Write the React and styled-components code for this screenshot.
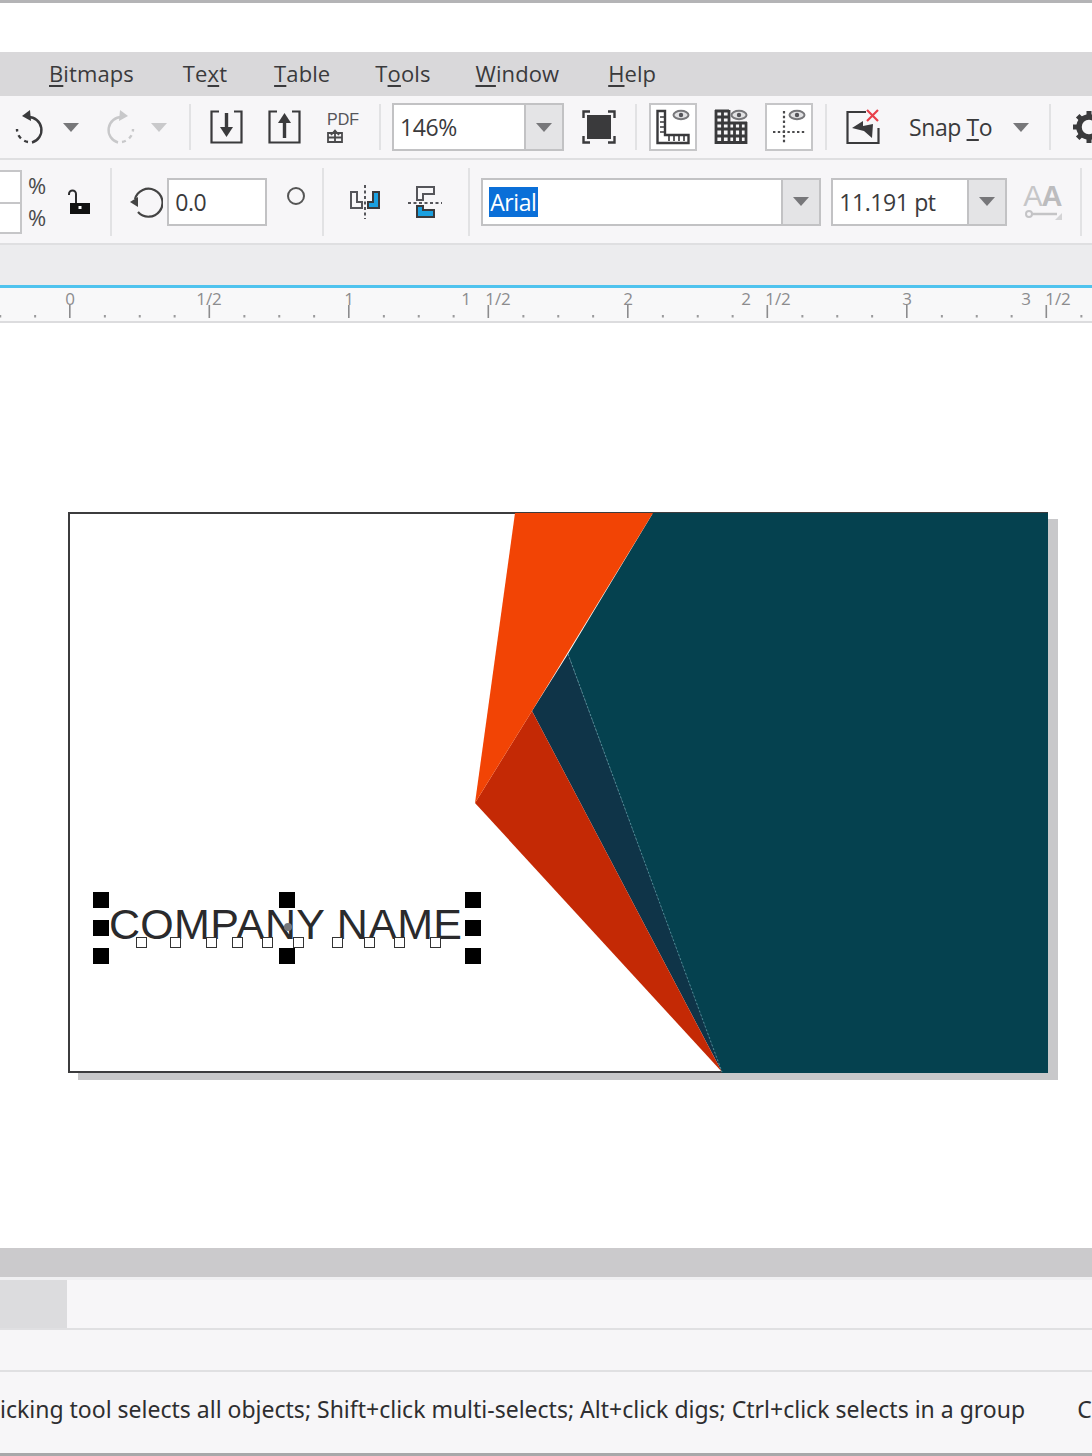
import styled, { createGlobalStyle } from "styled-components";

const GlobalStyle = createGlobalStyle`
    html, body {
        margin: 0;
        padding: 0;
        background: #fff;
    }
`;

const Page = styled.div`
    width: 1092px;
    height: 1456px;
    display: flex;
    flex-direction: column;
    overflow: hidden;
    background: #fff;
    font-family: "Open Sans", "Noto Sans", sans-serif;
    color: #333;
`;

const TopStrip = styled.div`
    height: 49px;
    flex: none;
    background: #fff;
    border-top: 3px solid #b4b4b6;
`;

const MenuBar = styled.nav`
    height: 44px;
    flex: none;
    background: #d9d8da;
    display: flex;
    align-items: center;
    font-size: 22px;
    letter-spacing: 0.1px;
    color: #3a3a3c;
`;

const MenuItem = styled.span`
    flex: none;
    margin-left: ${(p) => p.$ml}px;
    line-height: 42px;
    padding-bottom: 2px;
    white-space: nowrap;

    & u {
        text-underline-offset: 3px;
        text-decoration-thickness: 2px;
    }
`;

const Toolbar = styled.div`
    height: ${(p) => p.$h}px;
    flex: none;
    box-sizing: border-box;
    background: #f7f6f8;
    border-bottom: 2px solid #dfdfe1;
    display: flex;
    align-items: center;
`;

const Tool = styled.div`
    flex: none;
    width: ${(p) => p.$w}px;
    height: ${(p) => p.$h || 48}px;
    margin-left: ${(p) => p.$ml || 0}px;
    display: flex;
    align-items: center;
    justify-content: center;

    & svg {
        display: block;
    }
`;

const ToggleTool = styled(Tool)`
    background: #fff;
    border: 2px solid #c6c6c8;
    box-sizing: border-box;
`;

const StackedTool = styled(Tool)`
    flex-direction: column;
    align-items: flex-start;
    justify-content: center;
`;

const PdfLabel = styled.span`
    font-family: "Liberation Sans", Arial, sans-serif;
    font-size: 16px;
    line-height: 18px;
    color: #55555a;
`;

const AaLabel = styled.span`
    font-family: "Liberation Sans", Arial, sans-serif;
    font-size: 29px;
    line-height: 28px;
    color: #c6c6c8;
    letter-spacing: -1px;
    white-space: nowrap;

    & b {
        color: #bcbcbe;
    }
`;

const Sep = styled.div`
    flex: none;
    width: 2px;
    height: ${(p) => p.$h || 46}px;
    margin-left: ${(p) => p.$ml}px;
    background: #e2e2e4;
`;

const Caret = styled.div`
    flex: none;
    width: 0;
    height: 0;
    margin-left: ${(p) => p.$ml || 0}px;
    border-left: 8px solid transparent;
    border-right: 8px solid transparent;
    border-top: 9px solid ${(p) => (p.$muted ? "#c9c9cb" : "#77777a")};
`;

const Combo = styled.div`
    flex: none;
    display: flex;
    width: ${(p) => p.$w}px;
    height: 48px;
    margin-left: ${(p) => p.$ml}px;
    box-sizing: border-box;
    border: 2px solid #c2c2c4;
    background: #fff;
`;

const ComboText = styled.div`
    flex: 1;
    display: flex;
    align-items: center;
    padding-left: ${(p) => p.$pl || 6}px;
    font-size: 23px;
    letter-spacing: -0.4px;
    color: #3a3a3c;
`;

const ComboArrow = styled.div`
    flex: none;
    width: ${(p) => p.$w || 38}px;
    background: #e4e4e6;
    border-left: 2px solid #c2c2c4;
    box-sizing: border-box;
    display: flex;
    align-items: center;
    justify-content: center;
`;

const Selected = styled.span`
    background: #0a6fd8;
    color: #fff;
    line-height: 30px;
    height: 30px;
    padding: 0 1px;
`;

const SnapLabel = styled.span`
    flex: none;
    margin-left: 29px;
    font-size: 23px;
    letter-spacing: -0.4px;
    color: #3a3a3c;
    white-space: nowrap;

    & u {
        text-underline-offset: 3px;
        text-decoration-thickness: 2px;
    }
`;

const ScaleStack = styled.div`
    flex: none;
    width: 22px;
    height: 64px;
    box-sizing: border-box;
    background: #fff;
    border: 2px solid #c6c6c8;
    border-left: 0;

    &::after {
        content: "";
        display: block;
        height: 2px;
        margin-top: 30px;
        background: #c6c6c8;
    }
`;

const PercentStack = styled.div`
    flex: none;
    margin-left: 6px;
    display: flex;
    flex-direction: column;
    gap: 7px;
    font-size: 22px;
    line-height: 25px;
    color: #4a4a4c;
`;

const Degree = styled.div`
    flex: none;
    width: 14px;
    height: 14px;
    margin-left: 20px;
    margin-top: -12px;
    border: 2.5px solid #555;
    border-radius: 50%;
`;

const Band = styled.div`
    height: 40px;
    flex: none;
    background: #ececee;
`;

const BlueLine = styled.div`
    height: 3px;
    flex: none;
    background: #4fc3ee;
`;

const RulerWrap = styled.div`
    height: 35px;
    flex: none;
    background: #f8f8f9;
    border-bottom: 2px solid #dcdcde;
    box-sizing: border-box;

    & svg {
        display: block;
    }

    & text {
        font-family: "Open Sans", sans-serif;
        font-size: 17px;
        fill: #8c8c8e;
    }
`;

const Canvas = styled.main`
    flex: 1;
    min-height: 0;
    background: #fff;
    padding: 189px 0 0 68px;
`;

const Card = styled.div`
    position: relative;
    width: 980px;
    height: 561px;
    background: #fff;
    box-sizing: border-box;
    border: 2px solid #3c3c3e;
    border-right: 0;
    box-shadow: 10px 7px 0 #c8c8ca;

    & > svg {
        position: absolute;
        left: -2px;
        top: -2px;
    }
`;

const CompanyName = styled.div`
    position: absolute;
    left: 39px;
    top: 385px;
    font-family: "Liberation Sans", Arial, sans-serif;
    font-size: 43px;
    line-height: 50px;
    letter-spacing: 0.3px;
    color: #2a2a2c;
    white-space: nowrap;
`;

const Handle = styled.div`
    position: absolute;
    width: 16px;
    height: 16px;
    background: #000;
    left: ${(p) => p.$x - 70}px;
    top: ${(p) => p.$y - 514}px;
`;

const Node = styled.div`
    position: absolute;
    width: 11px;
    height: 11px;
    box-sizing: border-box;
    background: #fff;
    border: 1.5px solid #333;
    left: ${(p) => p.$x - 70}px;
    top: 423px;
`;

const CenterMark = styled.div`
    position: absolute;
    left: 214px;
    top: 409px;
    width: 8px;
    height: 8px;
    border-radius: 50%;
    background: #77777a;
`;

const GreyStrip = styled.div`
    height: 29px;
    flex: none;
    background: #cbcacc;
    border-bottom: 3px solid #f0f0f2;
`;

const PageTabs = styled.div`
    height: 50px;
    flex: none;
    box-sizing: border-box;
    background: #f7f6f8;
    border-bottom: 2px solid #e0e0e2;
`;

const ActiveTab = styled.div`
    width: 67px;
    height: 48px;
    background: #dcdcde;
`;

const EmptyRow = styled.div`
    height: 42px;
    flex: none;
    box-sizing: border-box;
    background: #f7f6f8;
    border-bottom: 2px solid #e0e0e2;
`;

const StatusBar = styled.footer`
    height: 84px;
    flex: none;
    box-sizing: border-box;
    background: #f7f6f8;
    border-bottom: 3px solid #a8a8aa;
    display: flex;
    align-items: center;
    overflow: hidden;
    white-space: nowrap;
    font-family: "Noto Sans", sans-serif;
    font-size: 23px;
    color: #2e2e30;
`;

const StatusText = styled.span`
    flex: none;
    padding-bottom: 8px;
`;

const StatusNext = styled.span`
    flex: none;
    margin-left: 52px;
    padding-bottom: 8px;
`;

const stroke = "#3a3a3c";

const UndoIcon = () => (
    <svg width="34" height="36" viewBox="0 0 34 36" fill="none" stroke={stroke} strokeWidth="2.4">
        <path d="M14 8 A13 13 0 0 1 18 33.5" />
        <path d="M14 33 A13 13 0 0 1 3 20" strokeDasharray="4 4" />
        <path d="M16 1 L8 7 L17 12 Z" fill={stroke} stroke="none" />
    </svg>
);

const RedoIcon = () => (
    <svg width="34" height="36" viewBox="0 0 34 36" fill="none" stroke="#c8c8ca" strokeWidth="2.4">
        <path d="M20 8 A13 13 0 0 0 16 33.5" />
        <path d="M20 33 A13 13 0 0 0 31 20" strokeDasharray="4 4" />
        <path d="M18 1 L26 7 L17 12 Z" fill="#c8c8ca" stroke="none" />
    </svg>
);

const TransferIcon = ({ up }) => (
    <svg width="33" height="34" viewBox="0 0 33 34" fill="none" stroke={stroke} strokeWidth="2.2">
        <path d="M9 1.5 H1.5 V32.5 H31.5 V1.5 H24" />
        {up ? (
            <>
                <path d="M16.5 28 V10" strokeWidth="3.4" />
                <path d="M16.5 3 L10 13 H23 Z" fill={stroke} stroke="none" />
            </>
        ) : (
            <>
                <path d="M16.5 3 V20" strokeWidth="3.4" />
                <path d="M16.5 27 L10 17 H23 Z" fill={stroke} stroke="none" />
            </>
        )}
    </svg>
);

const PdfBoxIcon = () => (
    <svg width="16" height="14" viewBox="0 0 16 14" fill="none" stroke="#4a4a4c" strokeWidth="1.8">
        <path d="M1 4 H15 V13 H1 Z M8 13 V5 M4 6 L8 1.5 L12 6 M1 8.5 H15" />
    </svg>
);

const FitIcon = () => (
    <svg width="34" height="34" viewBox="0 0 34 34" fill="none" stroke={stroke} strokeWidth="2.4">
        <path d="M1.5 8 V1.5 H8 M26 1.5 H32.5 V8 M32.5 26 V32.5 H26 M8 32.5 H1.5 V26" />
        <rect x="5" y="5" width="24" height="24" fill={stroke} stroke="none" />
    </svg>
);

const Eye = ({ x }) => (
    <g transform={`translate(${x} 1)`} fill="#e2e2e4" stroke="#77777a" strokeWidth="2">
        <ellipse cx="8" cy="5" rx="7.5" ry="4.2" />
        <circle cx="8" cy="5" r="2.2" fill="#55555a" stroke="none" />
    </g>
);

const RulersIcon = () => (
    <svg width="34" height="36" viewBox="0 0 34 36" fill="none" stroke={stroke} strokeWidth="2.4">
        <path d="M1.5 2 H9 V26 H32.5 V34 H1.5 Z" />
        <path d="M4 8 H8 M4 13 H8 M4 18 H8 M4 23 H8 M13 27 V32 M18 27 V32 M23 27 V32 M28 27 V32" strokeWidth="1.6" />
        <Eye x={17} />
    </svg>
);

const GridIcon = () => (
    <svg width="34" height="36" viewBox="0 0 34 36" fill="none" stroke={stroke} strokeWidth="2.8">
        <path d="M1 2 H15 M1 8 H15 M1 14 H33 M1 20 H33 M1 27 H33 M1 33.5 H33" />
        <path d="M2 1 V35 M8.5 1 V35 M15 1 V35 M20.5 13 V35 M26.5 13 V35 M32 13 V35" />
        <Eye x={17} />
    </svg>
);

const GuidesIcon = () => (
    <svg width="34" height="36" viewBox="0 0 34 36" fill="none" stroke="#4a4a4c" strokeWidth="2.2">
        <path d="M12 2 V34 M1 23 H33" strokeDasharray="2.4 2.4" />
        <Eye x={17} />
    </svg>
);

const SnapOffIcon = () => (
    <svg width="34" height="36" viewBox="0 0 34 36" fill="none" stroke={stroke} strokeWidth="2.2">
        <path d="M20 3 H1.5 V34 H32.5 V19" />
        <path d="M6 19 L17 12 V17 L27 15 L26 29 L18 22 Z" fill={stroke} stroke="none" />
        <path d="M21 1 L32 12 M32 1 L21 12" stroke="#e8404a" strokeWidth="2.2" />
    </svg>
);

const GearIcon = () => (
    <svg width="34" height="36" viewBox="0 0 34 36" fill="none" stroke={stroke}>
        <circle cx="18" cy="18" r="10" strokeWidth="5.5" />
        <path
            d="M18 2 V7 M18 29 V34 M2 18 H7 M29 18 H34 M6.7 6.7 L10 10 M26 26 L29.3 29.3 M6.7 29.3 L10 26 M26 10 L29.3 6.7"
            strokeWidth="5"
        />
    </svg>
);

const LockIcon = () => (
    <svg width="22" height="26" viewBox="0 0 22 26" fill="none" stroke="#2c2c2e" strokeWidth="2">
        <path d="M1 6 V5 A3.5 3.5 0 0 1 8 5 V14" />
        <rect x="2" y="14" width="20" height="11" fill="#111" stroke="none" />
        <rect x="10.5" y="17" width="3" height="3" fill="#fff" stroke="none" />
    </svg>
);

const RotateIcon = () => (
    <svg width="33" height="34" viewBox="0 0 33 34" fill="none" stroke="#444" strokeWidth="2.2">
        <path d="M5 14 A14 14 0 1 1 8 27" />
        <path d="M0 17 L8 12 L8 22 Z" fill="#444" stroke="none" />
    </svg>
);

const MirrorHIcon = () => (
    <svg width="32" height="34" viewBox="0 0 32 34" fill="none" stroke="#55555a" strokeWidth="2">
        <path d="M2 7 H8 V17 H13 V23 H2 Z" />
        <path d="M30 7 H24 V17 H19 V23 H30 Z" fill="#1aa0e0" stroke="#3a3a3c" />
        <path d="M16 0 V34" strokeDasharray="3 2.5" />
    </svg>
);

const MirrorVIcon = () => (
    <svg width="34" height="34" viewBox="0 0 34 34" fill="none" stroke="#55555a" strokeWidth="2">
        <path d="M9 2 H26 V9 H15 V15 H9 Z" />
        <path d="M9 21 H15 V25 H26 V32 H9 Z" fill="#1aa0e0" stroke="#3a3a3c" />
        <path d="M0 18 H34" strokeDasharray="3 2.5" />
    </svg>
);

const AaSliderIcon = () => (
    <svg width="40" height="11" viewBox="0 0 40 11" fill="none" stroke="#c4c4c6" strokeWidth="2.5">
        <path d="M8 4 H34" />
        <circle cx="6" cy="4" r="3" fill="#f7f6f8" strokeWidth="2" />
        <path d="M39 3 V10 H32 Z" fill="#d4d4d6" stroke="none" />
    </svg>
);

// ruler: 1/8 inch = 34.9px, zero at x=70
const RULER_ZERO = 70;
const HALF = 139.5;
const wholeLabels = [
    [0, "0"],
    [2, "1"],
    [4, "2"],
    [6, "3"],
];

const Ruler = () => {
    const ticks = [];
    for (let i = -2; i < 32; i++) {
        ticks.push(RULER_ZERO + (i * HALF) / 4);
    }
    return (
        <RulerWrap>
            <svg width="1092" height="33" viewBox="0 0 1092 33">
                {ticks.map((x, i) =>
                    (i - 2) % 4 === 0 ? (
                        <rect key={i} x={x - 1} y="17" width="1.6" height="13" fill="#8c8c8e" />
                    ) : (
                        <rect key={i} x={x - 1} y="27" width="2" height="2.5" fill="#9a9a9c" />
                    ),
                )}
                {wholeLabels.map(([n, label]) => (
                    <text key={n} x={RULER_ZERO + n * HALF} y="17" textAnchor="middle">
                        {label}
                    </text>
                ))}
                <text x="209" y="17" textAnchor="middle">1/2</text>
                <text x="466" y="17" textAnchor="middle">1</text>
                <text x="498" y="17" textAnchor="middle">1/2</text>
                <text x="746" y="17" textAnchor="middle">2</text>
                <text x="778" y="17" textAnchor="middle">1/2</text>
                <text x="1026" y="17" textAnchor="middle">3</text>
                <text x="1058" y="17" textAnchor="middle">1/2</text>
            </svg>
        </RulerWrap>
    );
};

const Artwork = () => (
    <svg width="980" height="561" viewBox="68 512 980 561">
        <polygon points="653,513 1048,513 1048,1073 722,1073 568,654" fill="#05414f" />
        <polygon points="532,711 568,654 722,1072" fill="#0f3448" />
        <polygon points="475,803 532,711 722,1072" fill="#c42905" />
        <polygon points="515,513 653,513 532,711 475,803" fill="#f24405" />
        <path d="M568 654 L722 1072" stroke="#4d8a96" strokeWidth="1" strokeDasharray="2 2" fill="none" />
    </svg>
);

const handleXs = [93, 279, 465];
const handleYs = [892, 920, 948];
const nodeXs = [136, 170, 206, 232, 262, 293, 332, 364, 394, 430];

export default function App() {
    return (
        <Page>
            <GlobalStyle />
            <TopStrip />
            <MenuBar>
                <MenuItem $ml={49}><u>B</u>itmaps</MenuItem>
                <MenuItem $ml={49}>Te<u>x</u>t</MenuItem>
                <MenuItem $ml={47}><u>T</u>able</MenuItem>
                <MenuItem $ml={45}>T<u>o</u>ols</MenuItem>
                <MenuItem $ml={45}><u>W</u>indow</MenuItem>
                <MenuItem $ml={49}><u>H</u>elp</MenuItem>
            </MenuBar>
            <Toolbar $h={64}>
                <Tool $w={34} $ml={14}><UndoIcon /></Tool>
                <Caret $ml={15} />
                <Tool $w={34} $ml={23}><RedoIcon /></Tool>
                <Caret $ml={15} $muted />
                <Sep $ml={22} />
                <Tool $w={33} $ml={19}><TransferIcon /></Tool>
                <Tool $w={33} $ml={25}><TransferIcon up /></Tool>
                <StackedTool $w={34} $ml={26}>
                    <PdfLabel>PDF</PdfLabel>
                    <PdfBoxIcon />
                </StackedTool>
                <Sep $ml={18} />
                <Combo $w={172} $ml={11}>
                    <ComboText>146%</ComboText>
                    <ComboArrow><Caret /></ComboArrow>
                </Combo>
                <Tool $w={34} $ml={18}><FitIcon /></Tool>
                <Sep $ml={19} />
                <ToggleTool $w={48} $ml={12}><RulersIcon /></ToggleTool>
                <Tool $w={48} $ml={10}><GridIcon /></Tool>
                <ToggleTool $w={48} $ml={10}><GuidesIcon /></ToggleTool>
                <Sep $ml={12} />
                <Tool $w={34} $ml={19}><SnapOffIcon /></Tool>
                <SnapLabel>Snap <u>T</u>o</SnapLabel>
                <Caret $ml={21} />
                <Sep $ml={20} />
                <Tool $w={34} $ml={20}><GearIcon /></Tool>
            </Toolbar>
            <Toolbar $h={85}>
                <ScaleStack />
                <PercentStack>
                    <span>%</span>
                    <span>%</span>
                </PercentStack>
                <Tool $w={22} $ml={22}><LockIcon /></Tool>
                <Sep $ml={20} $h={68} />
                <Tool $w={33} $ml={18}><RotateIcon /></Tool>
                <Combo $w={100} $ml={4}>
                    <ComboText>0.0</ComboText>
                </Combo>
                <Degree />
                <Sep $ml={17} $h={68} />
                <Tool $w={32} $ml={25}><MirrorHIcon /></Tool>
                <Tool $w={34} $ml={27}><MirrorVIcon /></Tool>
                <Sep $ml={26} $h={68} />
                <Combo $w={340} $ml={11}>
                    <ComboText><Selected>Arial</Selected></ComboText>
                    <ComboArrow><Caret /></ComboArrow>
                </Combo>
                <Combo $w={176} $ml={10}>
                    <ComboText>11.191 pt</ComboText>
                    <ComboArrow><Caret /></ComboArrow>
                </Combo>
                <StackedTool $w={40} $ml={16}>
                    <AaLabel>A<b>A</b></AaLabel>
                    <AaSliderIcon />
                </StackedTool>
                <Sep $ml={17} $h={68} />
            </Toolbar>
            <Band />
            <BlueLine />
            <Ruler />
            <Canvas>
                <Card>
                    <Artwork />
                    <CompanyName>COMPANY NAME</CompanyName>
                    {nodeXs.map((x) => (
                        <Node key={x} $x={x} />
                    ))}
                    <CenterMark />
                    {handleYs.map((y) =>
                        handleXs.map((x) =>
                            y === 920 && x === 279 ? null : <Handle key={`${x}-${y}`} $x={x} $y={y} />,
                        ),
                    )}
                </Card>
            </Canvas>
            <GreyStrip />
            <PageTabs>
                <ActiveTab />
            </PageTabs>
            <EmptyRow />
            <StatusBar>
                <StatusText>icking tool selects all objects; Shift+click multi-selects; Alt+click digs; Ctrl+click selects in a group</StatusText>
                <StatusNext>C</StatusNext>
            </StatusBar>
        </Page>
    );
}
